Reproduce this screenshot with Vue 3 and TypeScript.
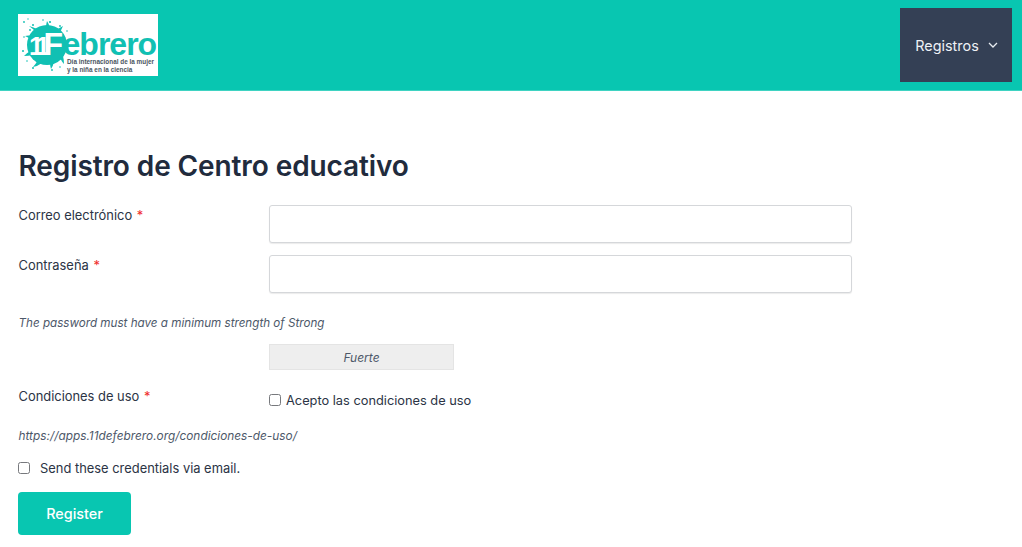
<script setup lang="ts">
const drops: [number, number, number][] = [
  [24, 22, 0.9], [28, 19, 0.7], [33, 25, 1], [30, 30, 0.9], [43, 20, 0.8], [50, 22, 1.1], [60, 26, 0.9], [24, 37, 0.8], [67, 31, 0.8], [23, 51, 1], [27, 61, 0.8], [33, 68, 1], [52, 70, 0.9], [60, 67, 0.8],
]
</script>

<template>
  <div class="page">
    <header class="topbar">
      <div class="logo">
        <svg class="splash" width="60" height="62" viewBox="18 14 60 62" aria-hidden="true">
          <circle cx="47" cy="45" r="20" fill="#11c0b3" />
          <path d="M36 32 Q32 28 29 26 Q33 27 39 30 Z M46 28 Q46 24 47 21 Q49 24 50 28 Z M57 30 Q59 28 63 26 Q61 30 60 33 Z M31 39 Q27 37 25 36 Q28 35 33 36 Z M31 51 Q26 53 24 56 Q28 56 33 55 Z M38 60 Q35 65 33 67 Q38 66 42 63 Z M50 62 Q50 66 51 69 Q53 66 54 62 Z M60 58 Q62 62 64 64 Q64 60 63 56 Z" fill="#11c0b3" />
          <circle v-for="(d, i) in drops" :key="i" :cx="d[0]" :cy="d[1]" :r="d[2]" fill="#11c0b3" />
        </svg>
        <div class="logo-word"><span class="w-white"><span class="one">11</span><span class="eff">F</span></span><span class="w-teal">ebrero</span></div>
        <div class="logo-sub">Día internacional de la mujer<br />y la niña en la ciencia</div>
      </div>
      <button class="nav-btn" type="button">
        <span>Registros</span>
        <svg width="10" height="6" viewBox="0 0 10 6" aria-hidden="true">
          <path d="M1 1 L5 5 L9 1" fill="none" stroke="#e8ecf1" stroke-width="1.3" />
        </svg>
      </button>
    </header>

    <main class="content">
      <h1>Registro de Centro educativo</h1>

      <div class="field">
        <label>Correo electrónico <em>*</em></label>
        <input type="email" />
      </div>
      <div class="field second">
        <label>Contraseña <em>*</em></label>
        <input type="password" />
      </div>

      <p class="hint hint-strength">The password must have a minimum strength of Strong</p>

      <div class="strength-row">
        <div class="strength">Fuerte</div>
      </div>

      <div class="terms">
        <label>Condiciones de uso <em>*</em></label>
        <div class="accept">
          <span class="box"></span>
          <span>Acepto las condiciones de uso</span>
        </div>
      </div>

      <p class="hint hint-url">https://apps.11defebrero.org/condiciones-de-uso/</p>

      <div class="send">
        <span class="box"></span>
        <span>Send these credentials via email.</span>
      </div>

      <button class="register" type="button">Register</button>
    </main>
  </div>
</template>

<style scoped>
.page {
  width: 1022px;
  height: 547px;
  overflow: hidden;
  background: #fff;
  font-family: Inter, "Liberation Sans", sans-serif;
  color: #2b3445;
}

.topbar {
  height: 91px;
  box-sizing: border-box;
  background: #08c6b1;
  border-bottom: 1px solid #3fd3c2;
  display: flex;
  align-items: flex-start;
  justify-content: space-between;
  padding: 8px 10px 0 18px;
}

.logo {
  position: relative;
  margin-top: 6px;
  width: 140px;
  height: 62px;
  background: #fff;
  overflow: hidden;
}

.splash {
  position: absolute;
  left: 0;
  top: 0;
}

.logo-word {
  position: absolute;
  left: 11px;
  top: 14px;
  font-family: "Liberation Sans", Arial, sans-serif;
  font-size: 32px;
  line-height: 32px;
  font-weight: 700;
  white-space: nowrap;
}

.one {
  font-size: 26px;
  letter-spacing: -6.5px;
}

.eff {
  letter-spacing: -0.5px;
}

.w-white {
  color: #fff;
}

.w-teal {
  color: #11c0b3;
  letter-spacing: -1px;
}

.logo-sub {
  position: absolute;
  left: 49px;
  top: 44px;
  font-family: "Liberation Sans", Arial, sans-serif;
  font-size: 6.4px;
  line-height: 8px;
  font-weight: 700;
  color: #4a5560;
  white-space: nowrap;
}

.nav-btn {
  width: 112px;
  height: 74px;
  border: 0;
  padding: 0 0 0 1px;
  background: #344055;
  color: #eef1f5;
  font-family: inherit;
  font-size: 14.4px;
  display: flex;
  align-items: center;
  justify-content: center;
  gap: 9px;
}

.content {
  padding: 0 18px;
}

h1 {
  margin: 57px 0 0 0.5px;
  font-size: 28px;
  line-height: 36px;
  font-weight: 600;
  color: #212b3d;
  letter-spacing: -0.1px;
}

.field {
  display: flex;
  align-items: flex-start;
  margin-top: 21px;
}

.field.second {
  margin-top: 12px;
}

label {
  display: block;
  font-size: 12.9px;
  line-height: 22px;
  font-weight: 400;
  color: #2b3445;
  padding-left: 0.5px;
}

label em {
  font-style: normal;
  color: #ef2b2b;
  margin-left: 1px;
}

.field label {
  width: 251px;
  box-sizing: border-box;
  flex: none;
}

input {
  width: 583px;
  height: 38px;
  box-sizing: border-box;
  border: 1px solid #d5d7da;
  border-radius: 3px;
  background: #fff;
  box-shadow: 0 1px 1px rgba(0, 0, 0, 0.08);
}

.hint {
  margin: 0;
  font-size: 11.65px;
  line-height: 16px;
  font-style: italic;
  color: #4d5869;
  padding-left: 0.5px;
}

.hint-strength {
  margin-top: 22px;
}

.strength-row {
  margin-top: 13px;
  padding-left: 251px;
}

.strength {
  width: 185px;
  height: 26px;
  box-sizing: border-box;
  border: 1px solid #e4e4e4;
  background: #eeeeee;
  font-size: 12px;
  line-height: 25px;
  font-style: italic;
  text-align: center;
  color: #4d5869;
}

.terms {
  display: flex;
  align-items: flex-start;
  margin-top: 16px;
}

.terms label {
  width: 251px;
  box-sizing: border-box;
  flex: none;
}

.accept,
.send {
  display: flex;
  align-items: center;
  font-size: 12.8px;
  line-height: 20px;
  font-weight: 400;
  color: #2b3445;
}

.accept {
  gap: 5px;
  margin-top: 5px;
}

.box {
  width: 12px;
  height: 12px;
  box-sizing: border-box;
  border: 1px solid #77797d;
  border-radius: 2.5px;
  background: #fff;
  flex: none;
  position: relative;
  top: -1px;
}

.hint-url {
  margin-top: 17px;
  font-size: 11.85px;
}

.send {
  gap: 10px;
  margin-top: 15px;
  font-size: 12.9px;
}

.register {
  display: block;
  margin-top: 13px;
  width: 113px;
  height: 43px;
  border: 0;
  border-radius: 4px;
  background: #08c6b1;
  color: #fff;
  font-family: inherit;
  font-size: 14.4px;
  font-weight: 500;
}
</style>
